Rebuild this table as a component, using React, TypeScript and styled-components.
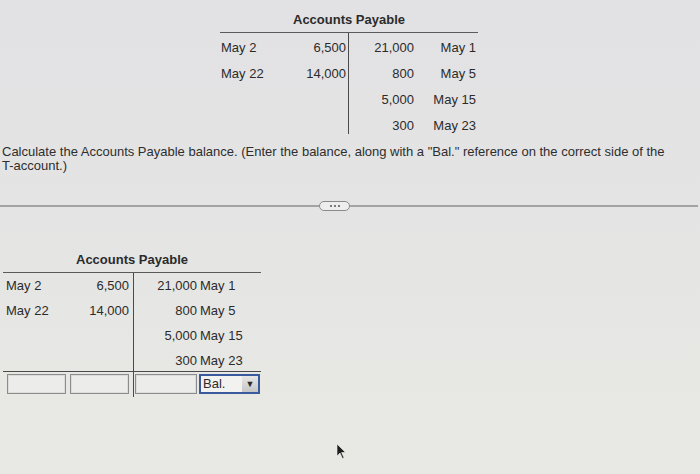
import React from "react";
import styled, { createGlobalStyle } from "styled-components";

const Global = createGlobalStyle`
  html, body { margin: 0; padding: 0; }
  body {
    background: #e5e5e4;
    font-family: "Liberation Sans", Arial, sans-serif;
    color: #2b2b2b;
  }
`;

const Page = styled.div`
  position: relative;
  width: 700px;
  height: 474px;
  overflow: hidden;
  background: linear-gradient(180deg, #e2e2e4 0%, #e4e4e4 45%, #e9e9e4 100%);
  font-size: 13px;
`;

const Account = styled.div<{ $left: number; $top: number }>`
  margin-left: ${(p) => p.$left}px;
  padding-top: ${(p) => p.$top}px;
  width: 258px;
`;

const Title = styled.div`
  text-align: center;
  font-weight: bold;
  font-size: 13px;
  line-height: 16px;
  padding-bottom: 4px;
  border-bottom: 1px solid #5a5a5a;
`;

const Body = styled.div<{ $cols: string }>`
  display: grid;
  grid-template-columns: ${(p) => p.$cols};
`;

const Side = styled.div<{ $right?: boolean }>`
  display: flex;
  flex-direction: column;
  border-left: ${(p) => (p.$right ? "1px solid #4a4a4a" : "none")};
`;

const Rows = styled.div<{ $h: number; $pt: number }>`
  height: ${(p) => p.$h}px;
  padding-top: ${(p) => p.$pt}px;
  box-sizing: border-box;
`;

const Row = styled.div<{ $h: number; $pad: string }>`
  display: flex;
  align-items: center;
  height: ${(p) => p.$h}px;
  padding: ${(p) => p.$pad};
`;

const Cell = styled.span<{ $w?: number; $align?: string; $grow?: boolean; $pl?: number }>`
  display: block;
  width: ${(p) => (p.$w ? `${p.$w}px` : "auto")};
  flex: ${(p) => (p.$grow ? "1" : "none")};
  text-align: ${(p) => p.$align || "left"};
  padding-left: ${(p) => p.$pl || 0}px;
  white-space: nowrap;
`;

const Instruction = styled.p`
  margin: 11px 0 0 2px;
  font-size: 13px;
  line-height: 14px;
  color: #2e2e2e;
`;

const Divider = styled.div`
  display: flex;
  align-items: center;
  margin-top: 28px;
  height: 10px;
  padding-right: 2px;
`;

const DividerLine = styled.div<{ $w?: number }>`
  height: 2px;
  background: #a3a3a3;
  width: ${(p) => (p.$w ? `${p.$w}px` : "auto")};
  flex: ${(p) => (p.$w ? "none" : "1")};
`;

const Pill = styled.div`
  width: 29px;
  height: 8px;
  border: 1px solid #8a8a8a;
  border-radius: 5px;
  background: #eeeeee;
  display: flex;
  align-items: center;
  justify-content: center;
  gap: 2px;
`;

const Dot = styled.span`
  width: 2px;
  height: 2px;
  border-radius: 50%;
  background: #555;
`;

const Entry = styled.div<{ $pad: string; $gap: number }>`
  display: flex;
  border-top: 1px solid #4a4a4a;
  padding: ${(p) => p.$pad};
  gap: ${(p) => p.$gap}px;
`;

const Input = styled.div<{ $w: number }>`
  width: ${(p) => p.$w}px;
  height: 20px;
  box-sizing: border-box;
  border: 1px solid #8c8c8c;
  box-shadow: inset 0 0 0 1px #dcdcda;
  background: #ececea;
`;

const Select = styled.div`
  width: 61px;
  height: 20px;
  box-sizing: border-box;
  border: 2px solid #3a5a9e;
  background: #f2f2f0;
  display: flex;
  align-items: center;
  padding-left: 2px;
  font-size: 13px;
`;

const SelectText = styled.span`
  flex: 1;
  line-height: 14px;
`;

const Arrow = styled.span`
  width: 16px;
  height: 16px;
  background: linear-gradient(180deg, #e6e6e6, #c6c6c6);
  display: flex;
  align-items: center;
  justify-content: center;
  font-size: 9px;
  color: #2a2a2a;
`;

const Cursor = styled.svg`
  position: absolute;
  left: 336px;
  top: 443px;
`;

const topLeft = [
  ["May 2", "6,500"],
  ["May 22", "14,000"],
];
const topRight = [
  ["21,000", "May 1"],
  ["800", "May 5"],
  ["5,000", "May 15"],
  ["300", "May 23"],
];

export default function App() {
  return (
    <Page>
      <Global />
      <Account $left={220} $top={12}>
        <Title>Accounts Payable</Title>
        <Body $cols="128px 130px">
          <Side>
            <Rows $h={101} $pt={1}>
              {topLeft.map(([d, a]) => (
                <Row key={d} $h={26} $pad="0 2px 0 1px">
                  <Cell $grow>{d}</Cell>
                  <Cell $align="right">{a}</Cell>
                </Row>
              ))}
            </Rows>
          </Side>
          <Side $right>
            <Rows $h={101} $pt={1}>
              {topRight.map(([a, d]) => (
                <Row key={d} $h={26} $pad="0 2px 0 0">
                  <Cell $w={65} $align="right">{a}</Cell>
                  <Cell $grow $align="right">{d}</Cell>
                </Row>
              ))}
            </Rows>
          </Side>
        </Body>
      </Account>

      <Instruction>
        Calculate the Accounts Payable balance. (Enter the balance, along with a "Bal." reference on the correct side of the
        <br />
        T-account.)
      </Instruction>

      <Divider>
        <DividerLine $w={319} />
        <Pill>
          <Dot />
          <Dot />
          <Dot />
        </Pill>
        <DividerLine />
      </Divider>

      <Account $left={3} $top={41}>
        <Title>Accounts Payable</Title>
        <Body $cols="130px 128px">
          <Side>
            <Rows $h={98} $pt={0}>
              {topLeft.map(([d, a]) => (
                <Row key={d} $h={25} $pad="0 4px 0 3px">
                  <Cell $grow>{d}</Cell>
                  <Cell $align="right">{a}</Cell>
                </Row>
              ))}
            </Rows>
            <Entry $pad="2px 0 3px 4px" $gap={4}>
              <Input $w={59} />
              <Input $w={59} />
            </Entry>
          </Side>
          <Side $right>
            <Rows $h={98} $pt={0}>
              {topRight.map(([a, d]) => (
                <Row key={d} $h={25} $pad="0">
                  <Cell $w={63} $align="right">{a}</Cell>
                  <Cell $grow $pl={3}>{d}</Cell>
                </Row>
              ))}
            </Rows>
            <Entry $pad="2px 0 3px 1px" $gap={2}>
              <Input $w={62} />
              <Select>
                <SelectText>Bal.</SelectText>
                <Arrow>▼</Arrow>
              </Select>
            </Entry>
          </Side>
        </Body>
      </Account>

      <Cursor width="10" height="17" viewBox="0 0 10 17">
        <path d="M1 1 L1 13 L4 10 L6.5 15.5 L8 14.8 L5.6 9.5 L9.5 9.5 Z" fill="#1e1e1e" stroke="#f0f0f0" strokeWidth="0.6" />
      </Cursor>
    </Page>
  );
}
